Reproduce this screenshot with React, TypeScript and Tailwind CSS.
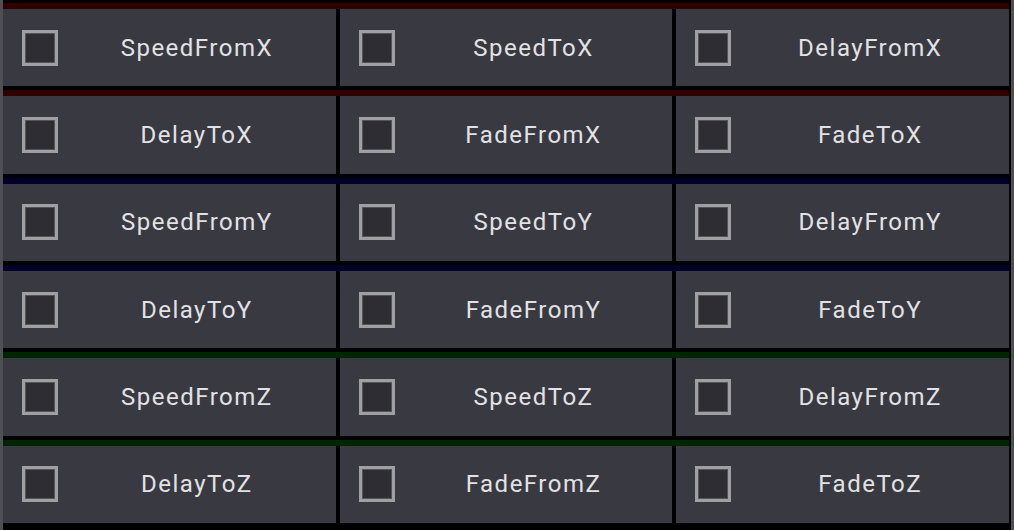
import React from 'react'

type Group = {
  band: string
  rows: string[][]
}

const groups: Group[] = [
  {
    band: 'bg-[#2e0000]',
    rows: [
      ['SpeedFromX', 'SpeedToX', 'DelayFromX'],
      ['DelayToX', 'FadeFromX', 'FadeToX'],
    ],
  },
  {
    band: 'bg-[#000028]',
    rows: [
      ['SpeedFromY', 'SpeedToY', 'DelayFromY'],
      ['DelayToY', 'FadeFromY', 'FadeToY'],
    ],
  },
  {
    band: 'bg-[#002600]',
    rows: [
      ['SpeedFromZ', 'SpeedToZ', 'DelayFromZ'],
      ['DelayToZ', 'FadeFromZ', 'FadeToZ'],
    ],
  },
]

function CheckCell({ label }: { label: string }) {
  return (
    <div className="flex flex-1 items-center bg-[#393941] pl-[19px]">
      <div className="h-[36px] w-[36px] shrink-0 border-[3px] border-[#a09fa4] bg-[#2e2d33]">
        <div className="h-full w-full border border-[#55545a]" />
      </div>
      <span className="flex-1 text-center text-[24px] tracking-[1.5px] text-[#e2e2e4]">
        {label}
      </span>
    </div>
  )
}

export default function App() {
  return (
    <div
      className="flex h-[530px] w-[1014px] bg-black"
      style={{ fontFamily: 'Roboto, "Liberation Sans", sans-serif' }}
    >
      <div className="w-[3px] bg-[#4e4e54]" />
      <div className="flex flex-1 flex-col gap-[4px] pb-[7px] pt-[3px]">
        {groups.flatMap((g) =>
          g.rows.map((row, i) => (
            <div key={row[0] + i} className="flex flex-1 flex-col">
              <div className={`h-[6px] ${g.band}`} />
              <div className="flex flex-1 gap-[4px]">
                {row.map((label) => (
                  <CheckCell key={label} label={label} />
                ))}
              </div>
            </div>
          ))
        )}
      </div>
      <div className="ml-[2px] w-[3px] bg-[#4e4e54]" />
    </div>
  )
}
